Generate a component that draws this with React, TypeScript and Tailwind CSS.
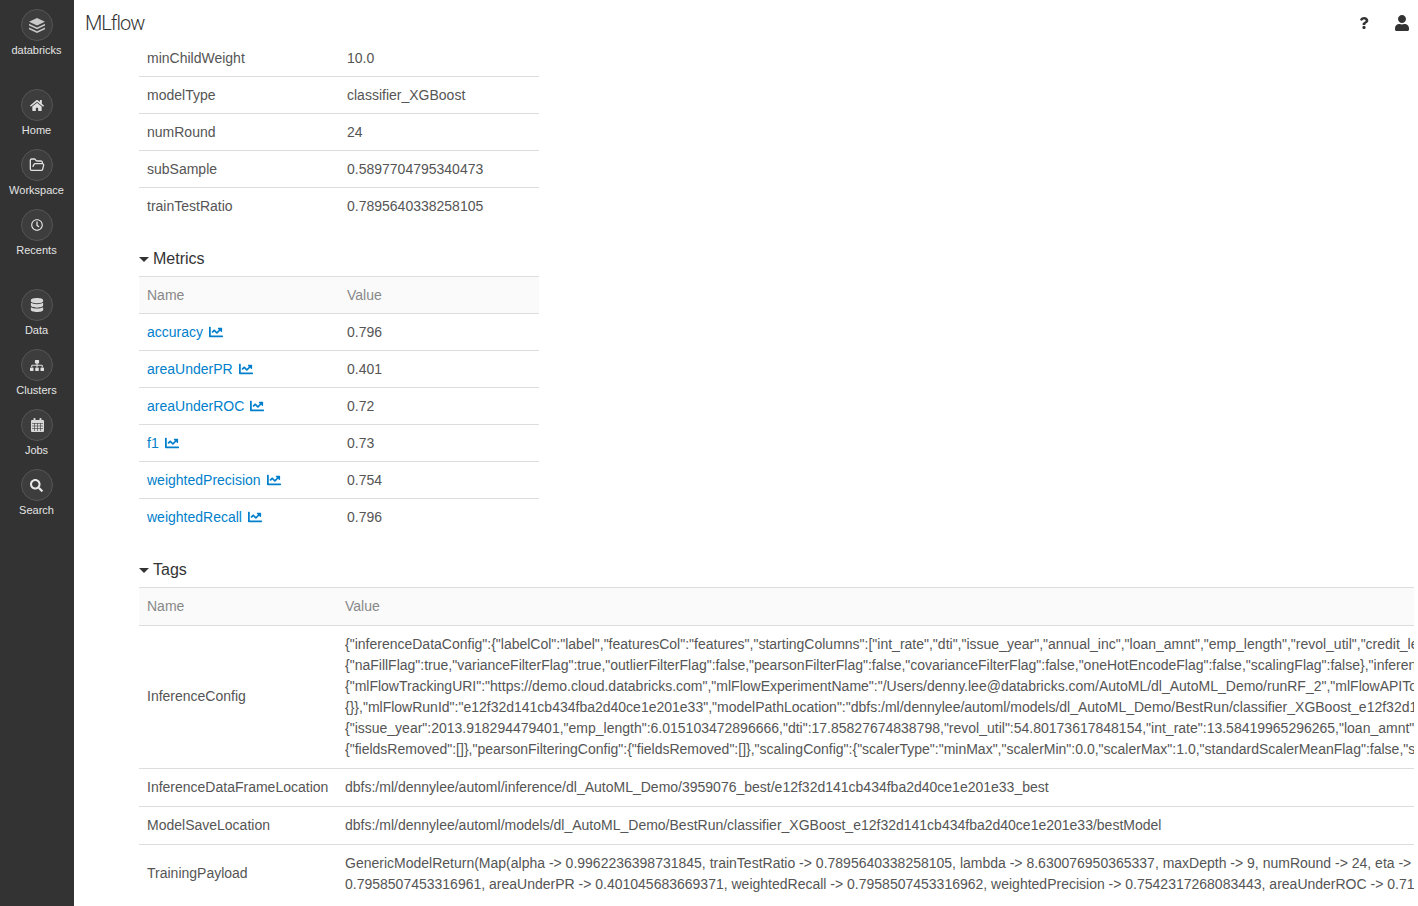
import type { ComponentType, ReactNode } from "react";
import { FolderOpen } from "lucide-react";
import {
  FaChartLine,
  FaDatabase,
  FaHome,
  FaQuestion,
  FaRegClock,
  FaSearch,
  FaSitemap,
  FaUser,
} from "react-icons/fa";

type IconProps = { className?: string };

type NavItem = {
  label: string;
  icon: ComponentType<IconProps>;
  size: string;
  gap?: boolean;
};

// databricks stack mark
function StackIcon({ className }: IconProps) {
  return (
    <svg viewBox="0 0 17 16" fill="currentColor" className={className}>
      <path d="M8.5 0 17 4 8.5 8 0 4z" />
      <path d="M0 6.2 8.5 10.2 17 6.2V8L8.5 12 0 8z" />
      <path d="M0 10.2 8.5 14.2 17 10.2V12L8.5 16 0 12z" />
    </svg>
  );
}

// font awesome 4 style calendar, the fa5 one has no grid
function CalendarIcon({ className }: IconProps) {
  return (
    <svg viewBox="0 0 13 14" className={className}>
      <rect x="0" y="2" width="13" height="12" rx="1" fill="currentColor" />
      <rect x="2.5" y="0" width="2" height="4" rx="0.8" fill="currentColor" />
      <rect x="8.5" y="0" width="2" height="4" rx="0.8" fill="currentColor" />
      <path d="M1 5.5H12M1 8H12M1 10.5H12M3.5 5V13M6.5 5V13M9.5 5V13" stroke="#3d3d3d" strokeWidth="0.6" />
    </svg>
  );
}

const navItems: NavItem[] = [
  { label: "databricks", icon: StackIcon, size: "h-[15px] w-4 text-[#c8c8c8]", gap: true },
  { label: "Home", icon: FaHome, size: "h-[13px] w-[14px] text-[#e0e0e0]" },
  { label: "Workspace", icon: FolderOpen, size: "h-4 w-4 text-[#e0e0e0]" },
  { label: "Recents", icon: FaRegClock, size: "h-3 w-3 text-[#e8e8e8]", gap: true },
  { label: "Data", icon: FaDatabase, size: "h-[14px] w-[14px] text-[#d8d8d8]" },
  { label: "Clusters", icon: FaSitemap, size: "h-[13px] w-[14px] text-[#e0e0e0]" },
  { label: "Jobs", icon: CalendarIcon, size: "h-[14px] w-[13px] text-[#d8d8d8]" },
  { label: "Search", icon: FaSearch, size: "h-[13px] w-[13px] text-[#e8e8e8]" },
];

const params = [
  ["minChildWeight", "10.0"],
  ["modelType", "classifier_XGBoost"],
  ["numRound", "24"],
  ["subSample", "0.5897704795340473"],
  ["trainTestRatio", "0.7895640338258105"],
];

const metrics = [
  ["accuracy", "0.796"],
  ["areaUnderPR", "0.401"],
  ["areaUnderROC", "0.72"],
  ["f1", "0.73"],
  ["weightedPrecision", "0.754"],
  ["weightedRecall", "0.796"],
];

const inferenceLines = [
  '{"inferenceDataConfig":{"labelCol":"label","featuresCol":"features","startingColumns":["int_rate","dti","issue_year","annual_inc","loan_amnt","emp_length","revol_util","credit_length_in_years"',
  '{"naFillFlag":true,"varianceFilterFlag":true,"outlierFilterFlag":false,"pearsonFilterFlag":false,"covarianceFilterFlag":false,"oneHotEncodeFlag":false,"scalingFlag":false},"inferenceDataLocation"',
  '{"mlFlowTrackingURI":"https://demo.cloud.databricks.com","mlFlowExperimentName":"/Users/denny.lee@databricks.com/AutoML/dl_AutoML_Demo/runRF_2","mlFlowAPIToken":"',
  '{}},"mlFlowRunId":"e12f32d141cb434fba2d40ce1e201e33","modelPathLocation":"dbfs:/ml/dennylee/automl/models/dl_AutoML_Demo/BestRun/classifier_XGBoost_e12f32d141cb434fba2d40ce1e201e33"',
  '{"issue_year":2013.918294479401,"emp_length":6.015103472896666,"dti":17.85827674838798,"revol_util":54.80173617848154,"int_rate":13.58419965296265,"loan_amnt":14000.0',
  '{"fieldsRemoved":[]},"pearsonFilteringConfig":{"fieldsRemoved":[]},"scalingConfig":{"scalerType":"minMax","scalerMin":0.0,"scalerMax":1.0,"standardScalerMeanFlag":false,"standardScalerStdFlag":false',
];

const payloadLines = [
  "GenericModelReturn(Map(alpha -> 0.9962236398731845, trainTestRatio -> 0.7895640338258105, lambda -> 8.630076950365337, maxDepth -> 9, numRound -> 24, eta -> 0.5",
  "0.7958507453316961, areaUnderPR -> 0.401045683669371, weightedRecall -> 0.7958507453316962, weightedPrecision -> 0.7542317268083443, areaUnderROC -> 0.7196",
];

function Sidebar() {
  return (
    <aside className="flex w-[74px] shrink-0 flex-col items-center bg-[#333333] pt-[9px]">
      {navItems.map((item) => {
        const Icon = item.icon;
        return (
          <div key={item.label} className={`flex h-[60px] flex-col items-center ${item.gap ? "mb-5" : ""}`}>
            <div className="flex h-8 w-8 items-center justify-center rounded-full border border-[#555555] bg-[#3d3d3d]">
              <Icon className={item.size} />
            </div>
            <span className="mt-px mr-px text-[11px] leading-[16px] text-[#e4e4e4]">{item.label}</span>
          </div>
        );
      })}
    </aside>
  );
}

function SectionTitle({ children }: { children: ReactNode }) {
  return (
    <div className="flex h-[24px] items-center text-[16px] text-[#333333]">
      <span className="mr-1 h-0 w-0 border-x-[5px] border-t-[5px] border-x-transparent border-t-[#333333]" />
      {children}
    </div>
  );
}

function SmallTable({ rows, head, link }: { rows: string[][]; head?: boolean; link?: boolean }) {
  return (
    <div className="w-[400px]">
      {head && (
        <div className="flex h-[38px] items-center border-y border-[#dddddd] bg-[#fafafa] text-[#888888]">
          <div className="w-[200px] pl-2">Name</div>
          <div className="pl-2">Value</div>
        </div>
      )}
      {rows.map(([name, value]) => (
        <div key={name} className="flex h-[37px] items-center pb-px not-last:border-b not-last:border-[#dddddd] last:h-[36px]">
          <div className="w-[200px] pl-2">
            {link ? (
              <span className="flex items-center gap-[6px] text-[#017fcc]">
                {name}
                <FaChartLine className="h-[14px] w-[14px]" />
              </span>
            ) : (
              name
            )}
          </div>
          <div className="pl-2">{value}</div>
        </div>
      ))}
    </div>
  );
}

function TagRow({ name, lines }: { name: string; lines: string[] }) {
  return (
    <div className="flex items-center border-b border-[#dddddd] py-2 last:border-b-0">
      <div className="-mt-[2px] w-[198px] shrink-0 pl-2 whitespace-nowrap">{name}</div>
      <div className="min-w-0 flex-1 overflow-hidden pl-2 leading-[21px] whitespace-nowrap">
        {lines.map((line) => (
          <div key={line}>{line}</div>
        ))}
      </div>
    </div>
  );
}

export default function App() {
  return (
    <div className="flex h-[906px] w-[1418px] overflow-hidden bg-white font-['Liberation_Sans',Arial,sans-serif] text-[14px] leading-[20px] text-[#555555]">
      <Sidebar />
      <div className="flex min-w-0 flex-1 flex-col pr-1">
        <header className="flex h-[40px] shrink-0 items-center justify-between pt-[6px] pr-1 pl-[11px] text-[#333333]">
          <span className="font-['Roboto',sans-serif] text-[20px] font-light tracking-[-1px]">MLflow</span>
          <div className="flex items-center gap-6">
            <FaQuestion className="h-3 w-3" />
            <FaUser className="h-4 w-4" />
          </div>
        </header>
        <main className="flex-1 overflow-hidden pl-[65px]">
          <SmallTable rows={params} />
          <div className="mt-[23px] mb-[5px]">
            <SectionTitle>Metrics</SectionTitle>
          </div>
          <SmallTable rows={metrics} head link />
          <div className="mt-[23px] mb-[5px]">
            <SectionTitle>Tags</SectionTitle>
          </div>
          <div>
            <div className="flex h-[39px] items-center border-y border-[#dddddd] bg-[#fafafa] pb-[2px] text-[#888888]">
              <div className="w-[198px] pl-2">Name</div>
              <div className="pl-2">Value</div>
            </div>
            <TagRow name="InferenceConfig" lines={inferenceLines} />
            <TagRow
              name="InferenceDataFrameLocation"
              lines={["dbfs:/ml/dennylee/automl/inference/dl_AutoML_Demo/3959076_best/e12f32d141cb434fba2d40ce1e201e33_best"]}
            />
            <TagRow
              name="ModelSaveLocation"
              lines={["dbfs:/ml/dennylee/automl/models/dl_AutoML_Demo/BestRun/classifier_XGBoost_e12f32d141cb434fba2d40ce1e201e33/bestModel"]}
            />
            <TagRow name="TrainingPayload" lines={payloadLines} />
          </div>
        </main>
      </div>
    </div>
  );
}
